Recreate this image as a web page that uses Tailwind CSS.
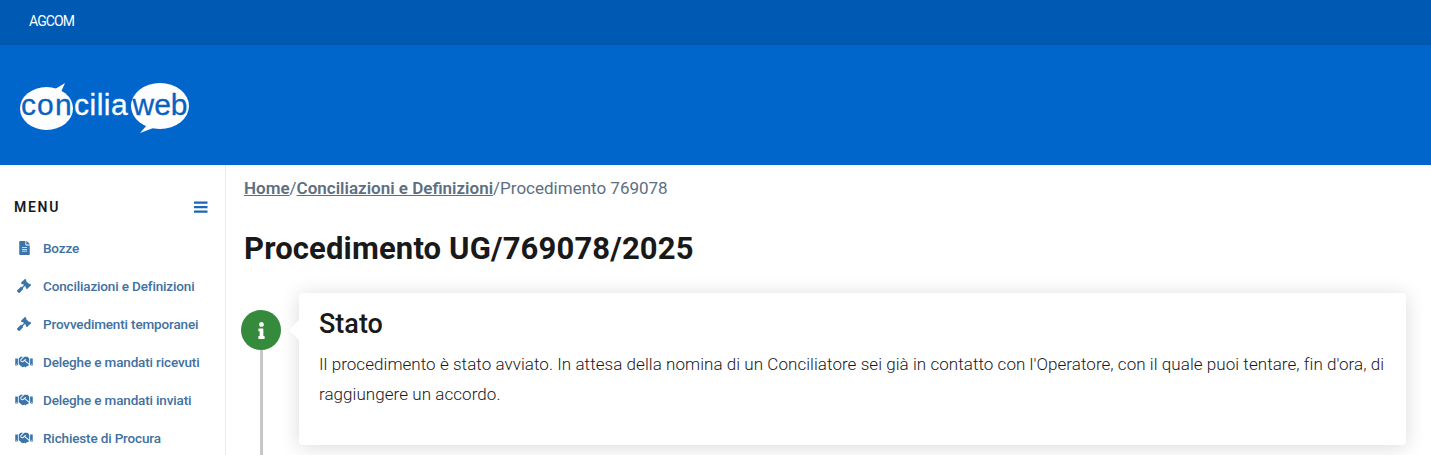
<!DOCTYPE html>
<html lang="it">
<head>
    <meta charset="UTF-8">
    <title>Procedimento UG/769078/2025</title>
    <script src="https://cdn.jsdelivr.net/npm/@tailwindcss/browser@4"></script>
</head>
<body class="h-[455px] overflow-hidden bg-white font-['Roboto',sans-serif] text-[#19191a]">
    <!-- Top bar -->
    <div class="h-[45px] bg-gradient-to-b from-[#0059b3] from-80% to-[#0057b0] pl-[29px] pt-[13px] text-[14px] leading-[16px] text-white tracking-[-0.9px]">AGCOM</div>

    <!-- Header -->
    <div class="h-[120px] bg-[#0066cc] pl-[19px] pt-[37px]">
        <svg width="172" height="52" viewBox="19 82 172 52" class="block">
            <path d="M52 91 L65 83 L60 94 Z" fill="#fff"/>
            <ellipse cx="46.5" cy="108.5" rx="26.5" ry="21.5" fill="#fff"/>
            <path d="M148 124 L140 133 L156 127 Z" fill="#fff"/>
            <ellipse cx="160" cy="106" rx="29" ry="23" fill="#fff"/>
            <text y="115" font-family="Liberation Sans" font-size="30"><tspan x="21" letter-spacing="1.1" fill="#0a62bf" stroke="#0a62bf" stroke-width="0.3">con</tspan><tspan x="74" letter-spacing="0.5" fill="#fff" stroke="#fff" stroke-width="0.3">cilia</tspan><tspan x="132.5" fill="#0a62bf" stroke="#0a62bf" stroke-width="0.3">web</tspan></text>
        </svg>
    </div>

    <div class="flex">
        <!-- Sidebar -->
        <aside class="w-[226px] shrink-0 h-[290px] border-r border-[#e6e9f2] pl-[14px] pr-[17px]">
            <div class="flex items-center justify-between pt-[27px] h-[56px]">
                <span class="text-[14px] font-semibold tracking-[1.7px] leading-[20px]">MENU</span>
                <svg width="14" height="12" viewBox="0 0 14 12"><path d="M0 .5h13.5v2.3H0zM0 5h13.5v2.3H0zM0 9.5h13.5v2.3H0z" fill="#1a66b8"/></svg>
            </div>
            <ul class="pt-[8px] text-[13.5px] font-medium leading-[38px] text-[#41719f] tracking-[-0.15px]">
                <li class="flex items-center h-[38px]">
                    <span class="w-[29px] flex justify-center pr-[9px]">
                        <svg width="11" height="14" viewBox="0 0 384 512" fill="#3b74ab"><path d="M224 136V0H24C10.7 0 0 10.7 0 24v464c0 13.3 10.7 24 24 24h336c13.3 0 24-10.7 24-24V160H248c-13.2 0-24-10.8-24-24zm64 236c0 6.6-5.4 12-12 12H108c-6.6 0-12-5.4-12-12v-8c0-6.6 5.4-12 12-12h168c6.6 0 12 5.4 12 12v8zm0-64c0 6.6-5.4 12-12 12H108c-6.6 0-12-5.4-12-12v-8c0-6.6 5.4-12 12-12h168c6.6 0 12 5.4 12 12v8zm0-72v8c0 6.6-5.4 12-12 12H108c-6.6 0-12-5.4-12-12v-8c0-6.6 5.4-12 12-12h168c6.6 0 12 5.4 12 12zm96-114.1v6.1H256V0h6.1c6.4 0 12.5 2.5 17 7l97.9 98c4.5 4.5 7 10.6 7 16.9z"/></svg>
                    </span>Bozze
                </li>
                <li class="flex items-center h-[38px]">
                    <span class="w-[29px] flex justify-center pr-[9px]">
                        <svg width="14" height="14" viewBox="0 0 512 512" fill="#3b74ab"><path d="M504.971 199.362l-22.627-22.627c-9.373-9.373-24.569-9.373-33.941 0l-5.657 5.657L329.608 69.255l5.657-5.657c9.373-9.373 9.373-24.569 0-33.941L312.638 7.029c-9.373-9.373-24.569-9.373-33.941 0L154.246 131.48c-9.373 9.373-9.373 24.569 0 33.941l22.627 22.627c9.373 9.373 24.569 9.373 33.941 0l5.657-5.657 39.598 39.598-81.04 81.04-5.657-5.657c-12.497-12.497-32.758-12.497-45.255 0L9.373 412.118c-12.497 12.497-12.497 32.758 0 45.255l45.255 45.255c12.497 12.497 32.758 12.497 45.255 0l114.745-114.745c12.497-12.497 12.497-32.758 0-45.255l-5.657-5.657 81.04-81.04 39.598 39.598-5.657 5.657c-9.373 9.373-9.373 24.569 0 33.941l22.627 22.627c9.373 9.373 24.569 9.373 33.941 0l124.451-124.451c9.372-9.372 9.372-24.568 0-33.941z"/></svg>
                    </span>Conciliazioni e Definizioni
                </li>
                <li class="flex items-center h-[38px]">
                    <span class="w-[29px] flex justify-center pr-[9px]">
                        <svg width="14" height="14" viewBox="0 0 512 512" fill="#3b74ab"><path d="M504.971 199.362l-22.627-22.627c-9.373-9.373-24.569-9.373-33.941 0l-5.657 5.657L329.608 69.255l5.657-5.657c9.373-9.373 9.373-24.569 0-33.941L312.638 7.029c-9.373-9.373-24.569-9.373-33.941 0L154.246 131.48c-9.373 9.373-9.373 24.569 0 33.941l22.627 22.627c9.373 9.373 24.569 9.373 33.941 0l5.657-5.657 39.598 39.598-81.04 81.04-5.657-5.657c-12.497-12.497-32.758-12.497-45.255 0L9.373 412.118c-12.497 12.497-12.497 32.758 0 45.255l45.255 45.255c12.497 12.497 32.758 12.497 45.255 0l114.745-114.745c12.497-12.497 12.497-32.758 0-45.255l-5.657-5.657 81.04-81.04 39.598 39.598-5.657 5.657c-9.373 9.373-9.373 24.569 0 33.941l22.627 22.627c9.373 9.373 24.569 9.373 33.941 0l124.451-124.451c9.372-9.372 9.372-24.568 0-33.941z"/></svg>
                    </span>Provvedimenti temporanei
                </li>
                <li class="flex items-center h-[38px]">
                    <span class="w-[29px] flex justify-center pr-[9px]">
                        <svg width="18" height="14" viewBox="0 0 640 512" fill="#3b74ab"><path d="M434.7 64h-85.9c-8 0-15.7 3-21.6 8.4l-98.3 90c-.1.1-.2.3-.3.4-16.6 15.6-16.3 40.5-2.1 56 12.7 13.9 39.4 17.6 56.1 2.7.1-.1.3-.1.4-.2l79.9-73.2c6.5-5.9 16.7-5.5 22.6 1 6 6.5 5.5 16.6-1 22.6l-26.1 23.9L504 313.8c2.9 2.4 5.5 5 7.9 7.7V128l-54.6-54.6c-5.9-6-14.1-9.4-22.6-9.4zM544 128.2v223.9c0 17.7 14.3 32 32 32h64V128.2h-96zm48 223.9c-8.8 0-16-7.2-16-16s7.2-16 16-16 16 7.2 16 16-7.2 16-16 16zM0 384h64c17.7 0 32-14.3 32-32V128.2H0V384zm48-63.9c8.8 0 16 7.2 16 16s-7.2 16-16 16-16-7.2-16-16c0-8.9 7.2-16 16-16zm435.9 18.6L334.6 217.5l-30 27.5c-29.7 27.1-75.2 24.5-101.7-4.4-26.9-29.4-24.8-74.9 4.4-101.7L289.1 64h-83.8c-8.5 0-16.6 3.4-22.6 9.4L128 128v223.9h18.3l90.5 81.9c27.4 22.3 67.7 18.1 90-9.3l.2-.2 17.9 15.5c15.9 13 39.4 10.5 52.3-5.4l31.4-38.6 5.4 4.4c13.7 11.1 33.9 9.1 45-4.7l9.5-11.7c11.2-13.8 9.1-33.9-4.6-45.1z"/></svg>
                    </span>Deleghe e mandati ricevuti
                </li>
                <li class="flex items-center h-[38px]">
                    <span class="w-[29px] flex justify-center pr-[9px]">
                        <svg width="18" height="14" viewBox="0 0 640 512" fill="#3b74ab"><path d="M434.7 64h-85.9c-8 0-15.7 3-21.6 8.4l-98.3 90c-.1.1-.2.3-.3.4-16.6 15.6-16.3 40.5-2.1 56 12.7 13.9 39.4 17.6 56.1 2.7.1-.1.3-.1.4-.2l79.9-73.2c6.5-5.9 16.7-5.5 22.6 1 6 6.5 5.5 16.6-1 22.6l-26.1 23.9L504 313.8c2.9 2.4 5.5 5 7.9 7.7V128l-54.6-54.6c-5.9-6-14.1-9.4-22.6-9.4zM544 128.2v223.9c0 17.7 14.3 32 32 32h64V128.2h-96zm48 223.9c-8.8 0-16-7.2-16-16s7.2-16 16-16 16 7.2 16 16-7.2 16-16 16zM0 384h64c17.7 0 32-14.3 32-32V128.2H0V384zm48-63.9c8.8 0 16 7.2 16 16s-7.2 16-16 16-16-7.2-16-16c0-8.9 7.2-16 16-16zm435.9 18.6L334.6 217.5l-30 27.5c-29.7 27.1-75.2 24.5-101.7-4.4-26.9-29.4-24.8-74.9 4.4-101.7L289.1 64h-83.8c-8.5 0-16.6 3.4-22.6 9.4L128 128v223.9h18.3l90.5 81.9c27.4 22.3 67.7 18.1 90-9.3l.2-.2 17.9 15.5c15.9 13 39.4 10.5 52.3-5.4l31.4-38.6 5.4 4.4c13.7 11.1 33.9 9.1 45-4.7l9.5-11.7c11.2-13.8 9.1-33.9-4.6-45.1z"/></svg>
                    </span>Deleghe e mandati inviati
                </li>
                <li class="flex items-center h-[38px]">
                    <span class="w-[29px] flex justify-center pr-[9px]">
                        <svg width="18" height="14" viewBox="0 0 640 512" fill="#3b74ab"><path d="M434.7 64h-85.9c-8 0-15.7 3-21.6 8.4l-98.3 90c-.1.1-.2.3-.3.4-16.6 15.6-16.3 40.5-2.1 56 12.7 13.9 39.4 17.6 56.1 2.7.1-.1.3-.1.4-.2l79.9-73.2c6.5-5.9 16.7-5.5 22.6 1 6 6.5 5.5 16.6-1 22.6l-26.1 23.9L504 313.8c2.9 2.4 5.5 5 7.9 7.7V128l-54.6-54.6c-5.9-6-14.1-9.4-22.6-9.4zM544 128.2v223.9c0 17.7 14.3 32 32 32h64V128.2h-96zm48 223.9c-8.8 0-16-7.2-16-16s7.2-16 16-16 16 7.2 16 16-7.2 16-16 16zM0 384h64c17.7 0 32-14.3 32-32V128.2H0V384zm48-63.9c8.8 0 16 7.2 16 16s-7.2 16-16 16-16-7.2-16-16c0-8.9 7.2-16 16-16zm435.9 18.6L334.6 217.5l-30 27.5c-29.7 27.1-75.2 24.5-101.7-4.4-26.9-29.4-24.8-74.9 4.4-101.7L289.1 64h-83.8c-8.5 0-16.6 3.4-22.6 9.4L128 128v223.9h18.3l90.5 81.9c27.4 22.3 67.7 18.1 90-9.3l.2-.2 17.9 15.5c15.9 13 39.4 10.5 52.3-5.4l31.4-38.6 5.4 4.4c13.7 11.1 33.9 9.1 45-4.7l9.5-11.7c11.2-13.8 9.1-33.9-4.6-45.1z"/></svg>
                    </span>Richieste di Procura
                </li>
            </ul>
        </aside>

        <!-- Main content -->
        <main class="flex-1 pl-[18px] pr-[25px]">
            <nav class="pt-[12px] text-[17px] leading-[22px] text-[#5c6f82]">
                <a class="font-semibold underline">Home</a>/<a class="font-semibold underline">Conciliazioni e Definizioni</a>/<span>Procedimento 769078</span>
            </nav>
            <h1 class="mt-[31px] text-[31px] font-bold leading-[38px] tracking-[0.15px]">Procedimento UG/769078/2025</h1>

            <div class="mt-[25px] flex">
                <div class="w-[55px] shrink-0 flex flex-col items-start">
                    <div class="mt-[17px] -ml-[3px] flex h-[40px] w-[40px] items-center justify-center rounded-full bg-[#368a3c]">
                        <svg width="7" height="17" viewBox="0 0 192 512" fill="#fff"><path d="M20 424.229h20V279.771H20c-11.046 0-20-8.954-20-20V212c0-11.046 8.954-20 20-20h112c11.046 0 20 8.954 20 20v212.229h20c11.046 0 20 8.954 20 20V492c0 11.046-8.954 20-20 20H20c-11.046 0-20-8.954-20-20v-47.771c0-11.046 8.954-20 20-20zM96 0C56.235 0 24 32.235 24 72s32.235 72 72 72 72-32.235 72-72S135.764 0 96 0z"/></svg>
                    </div>
                    <div class="ml-[16px] h-[105px] w-[3px] bg-[#c5c7c9]"></div>
                </div>
                <div class="relative h-[152px] flex-1 rounded-[4px] bg-white px-[20px] pt-[14px] shadow-[0_2px_20px_rgba(0,0,0,0.15)]">
                    <div class="absolute left-[-10px] top-[27px] h-0 w-0 border-y-[10px] border-r-[10px] border-y-transparent border-r-white"></div>
                    <h2 class="text-[27px] font-medium leading-[34px]">Stato</h2>
                    <p class="mt-[8px] text-[17px] font-light leading-[30px] tracking-[0.055px] text-[#19191a]">Il procedimento è stato avviato. In attesa della nomina di un Conciliatore sei già in contatto con l'Operatore, con il quale puoi tentare, fin d'ora, di raggiungere un accordo.</p>
                </div>
            </div>
        </main>
    </div>
</body>
</html>
